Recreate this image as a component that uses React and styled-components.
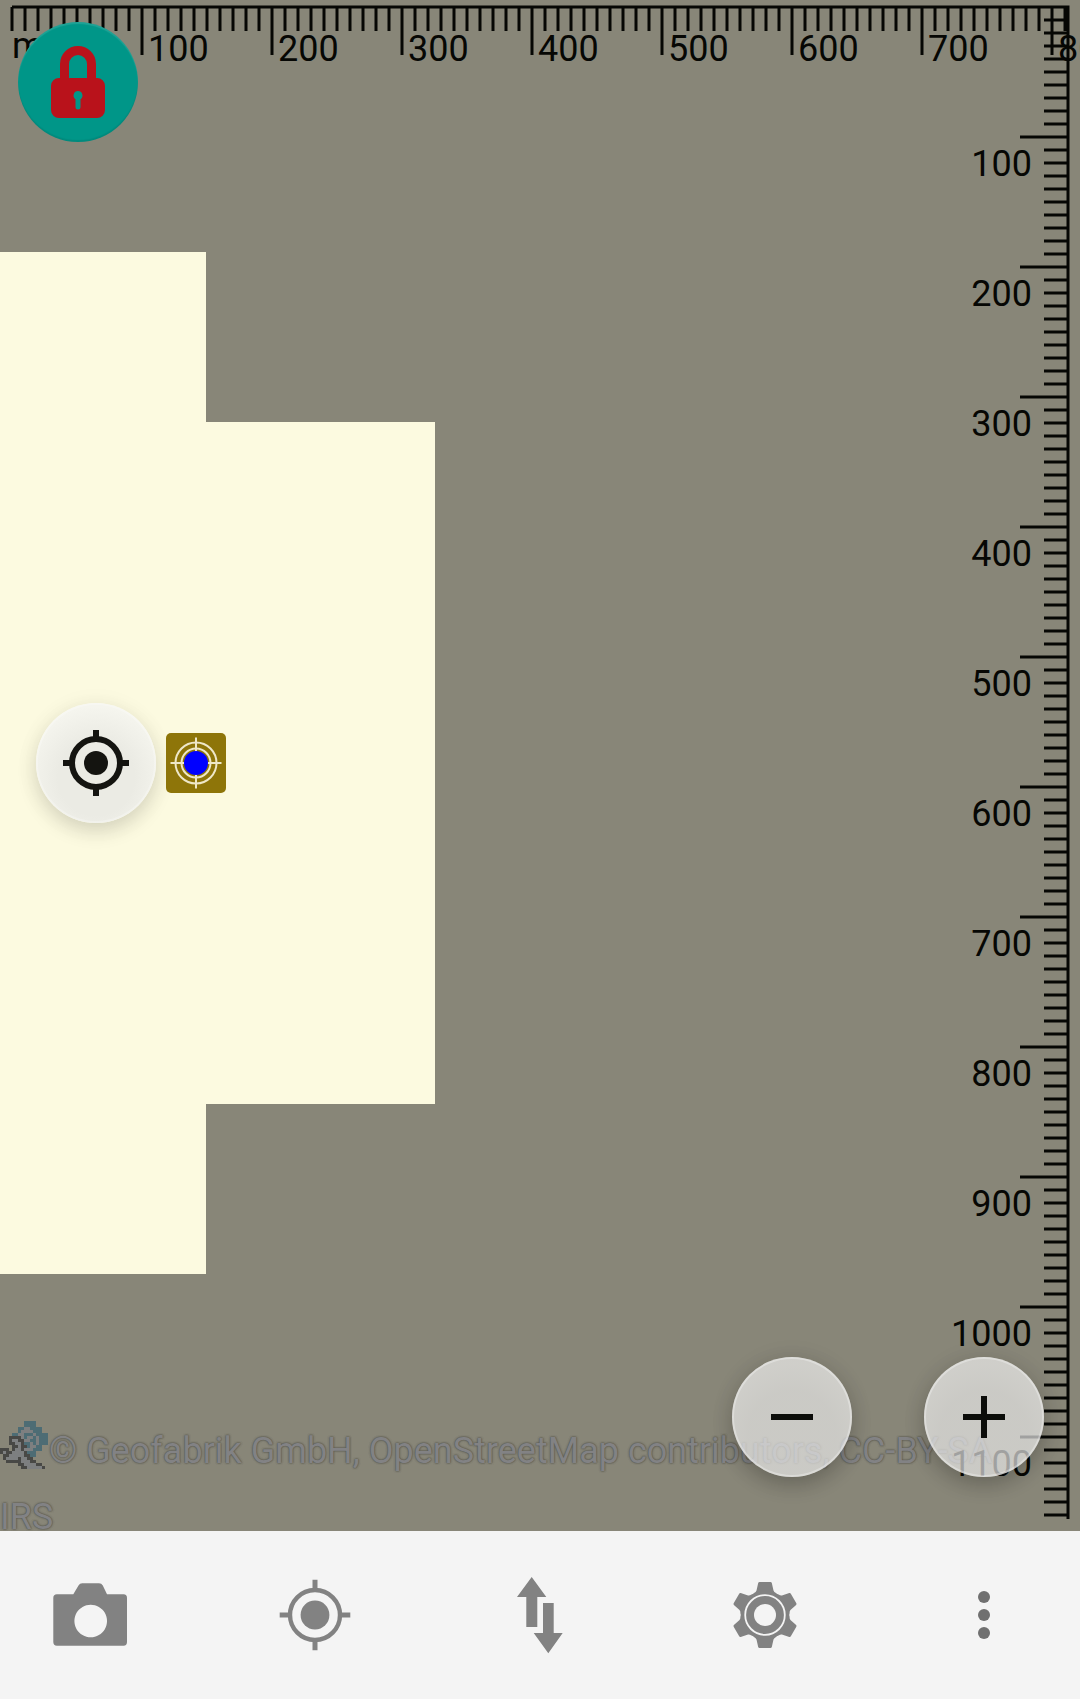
import React, { useLayoutEffect, useRef, useState } from "react";
import styled, { createGlobalStyle } from "styled-components";

const Global = createGlobalStyle`
  *, *::before, *::after { box-sizing: border-box; }
  body { margin: 0; font-family: Roboto, "Liberation Sans", sans-serif; }
`;

const Screen = styled.div`
  display: flex;
  flex-direction: column;
  height: 100vh;
  background: #f4f4f4;
`;

const MapView = styled.main`
  position: relative;
  flex: 1;
  min-height: 0;
  overflow: hidden;
  background: #888678;
`;

const Tile = styled.div`
  position: absolute;
  left: ${(p) => p.$x}px;
  top: ${(p) => p.$y}px;
  width: ${(p) => p.$w}px;
  height: ${(p) => p.$h}px;
  background: #fcfae0;
`;

const RulerLayer = styled.svg`
  position: absolute;
  inset: 0;
  width: 100%;
  height: 100%;
  pointer-events: none;

  path {
    fill: none;
    stroke: #060704;
    stroke-width: 3px;
  }

  text {
    fill: #060704;
    font-size: 36px;
  }
`;

const Attribution = styled.p`
  position: absolute;
  left: 0;
  right: 0;
  bottom: -19px;
  margin: 0;
  color: #828284;
  font-size: 36px;
  line-height: 66px;
  text-shadow: 0 0 2px #55554c, 0 0 2px #55554c;
`;

const PixelLogo = styled.svg`
  width: 48px;
  height: 48px;
  margin-right: 1px;
  vertical-align: -6px;
`;

const RoundButton = styled.button`
  display: grid;
  place-items: center;
  width: 120px;
  height: 120px;
  padding: 0;
  border: 0;
  border-radius: 50%;
  color: #0c0d0a;
  background: radial-gradient(circle at 50% 65%, rgba(234, 234, 234, 0.68) 45%, rgba(241, 241, 241, 0.68) 72%);
  box-shadow: inset 0 0 0 2px rgba(255, 255, 255, 0.3), 0 8px 20px rgba(0, 0, 0, 0.2), 0 2px 28px rgba(0, 0, 0, 0.06);
`;

const LockButton = styled(RoundButton)`
  position: absolute;
  left: 18px;
  top: 22px;
  color: #b9121b;
  background: #009688;
  box-shadow: inset 0 2px 1px rgba(255, 255, 255, 0.12), inset 0 -2px 1px rgba(0, 0, 0, 0.08);
`;

const LocationPin = styled.div`
  position: absolute;
  left: 36px;
  top: 703px;
  display: flex;
  align-items: center;
  gap: 10px;
`;

const Marker = styled.div`
  width: 60px;
  height: 60px;
  border-radius: 5px;
  background: #8e7509;
`;

const LocateButton = styled(RoundButton)`
  color: #141410;
  background: radial-gradient(circle at 50% 62%, #ebebe4 40%, #f5f5ee 74%);
  box-shadow: inset 0 0 0 2px rgba(255, 255, 255, 0.25), 0 8px 20px rgba(0, 0, 0, 0.14), 0 2px 28px rgba(0, 0, 0, 0.04);
`;

const ZoomControls = styled.div`
  position: absolute;
  right: 36px;
  bottom: 54px;
  display: flex;
  gap: 72px;
`;

const Toolbar = styled.nav`
  display: flex;
  align-items: center;
  justify-content: space-between;
  height: 168px;
  padding: 0 60px 0 48px;
  background: #f4f4f4;
`;

const ToolButton = styled.button`
  display: grid;
  place-items: center;
  width: ${(p) => (p.$narrow ? 72 : 84)}px;
  height: 84px;
  padding: 0;
  border: 0;
  color: ${(p) => (p.$narrow ? "#707070" : "#828282")};
  background: none;
`;

const Icon = styled.svg`
  display: block;
  width: ${(p) => p.$size}px;
  height: ${(p) => p.$size}px;
  fill: currentColor;
`;

const STEP = 13;
const MAJOR = STEP * 10;
const TOP = { x: 12, y: 7 };
const MARGIN = 12;

function Rulers({ width, height }) {
  const right = width - MARGIN;
  const bottom = height - MARGIN;
  const across = Math.max(0, Math.floor((right - TOP.x) / STEP));
  const down = Math.max(0, Math.floor((bottom - TOP.y) / STEP));
  let d = `M${TOP.x} ${TOP.y}H${right}V${bottom}`;
  for (let i = 0; i <= across; i++) {
    d += `M${TOP.x + i * STEP} ${TOP.y}V${i > 0 && i % 10 === 0 ? 55 : 31}`;
  }
  for (let i = 1; i <= down; i++) {
    d += `M${right} ${TOP.y + i * STEP}h${i % 10 === 0 ? -48 : -24}`;
  }
  const xs = Array.from({ length: Math.floor(across / 10) }, (_, i) => i + 1);
  const ys = Array.from({ length: Math.floor(down / 10) }, (_, i) => i + 1);
  return (
    <RulerLayer aria-label="Scale rulers in metres">
      <path d={d} />
      <text x="12" y="58">m</text>
      {xs.map((n) => (
        <text key={n} x={TOP.x + n * MAJOR + 6} y="61">{n * 100}</text>
      ))}
      {ys.map((n) => (
        <text key={n} x={right - 36} y={TOP.y + n * MAJOR + 39} textAnchor="end">{n * 100}</text>
      ))}
    </RulerLayer>
  );
}

const LOGO = [
  "........bbbb....",
  "........bbbb....",
  "......bbggbbbb..",
  "......bggggbbb..",
  "....bbggbbbgbbbb",
  "...ddddgbggbgbbb",
  "...dggddggbbgbbb",
  "...ddggdbbgbgbbb",
  "....ddgddbggbb..",
  "ddd.dggdgggbbb..",
  "dgddggggdbbb....",
  ".ddgggggddbb....",
  ".dggggdggdd.....",
  "..dddddgggdd....",
  "......ddggggdd..",
  ".......ddgggggd.",
];
const LOGO_COLORS = { b: "#4d6c74", g: "#7d7f80", d: "#484845" };

function Logo() {
  return (
    <PixelLogo viewBox="0 0 16 16" shapeRendering="crispEdges" aria-hidden="true">
      {LOGO.flatMap((row, y) =>
        [...row].map((c, x) =>
          c === "." ? null : <rect key={`${x}-${y}`} x={x} y={y} width="1" height="1" fill={LOGO_COLORS[c]} />
        )
      )}
    </PixelLogo>
  );
}

export default function App() {
  const mapRef = useRef(null);
  const [size, setSize] = useState({ width: 0, height: 0 });

  useLayoutEffect(() => {
    const el = mapRef.current;
    const measure = () => setSize({ width: el.clientWidth, height: el.clientHeight });
    measure();
    const observer = new ResizeObserver(measure);
    observer.observe(el);
    return () => observer.disconnect();
  }, []);

  return (
    <Screen>
      <Global />
      <MapView ref={mapRef}>
        <Tile $x={0} $y={252} $w={206} $h={1022} />
        <Tile $x={206} $y={422} $w={229} $h={682} />
        <Attribution>
          <Logo />© Geofabrik GmbH, OpenStreetMap contributors, CC-BY-SA
          <br />
          IRS
        </Attribution>
        <Rulers width={size.width} height={size.height} />
        <LockButton type="button" aria-label="Unlock map">
          <Icon $size={72} viewBox="0 0 72 72">
            <path
              fillRule="evenodd"
              d="M18 32V18a18 18 0 0 1 36 0V32h1a8 8 0 0 1 8 8V64a8 8 0 0 1-8 8H17a8 8 0 0 1-8-8V40a8 8 0 0 1 8-8ZM27 32H45V18a9 9 0 0 0-18 0ZM36 45a4.5 4.5 0 0 0-2.5 8.200V61a2.500 2.500 0 0 0 5 0V53.200A4.500 4.500 0 0 0 36 45Z"
            />
          </Icon>
        </LockButton>
        <LocationPin>
          <LocateButton type="button" aria-label="Centre on my location">
            <Icon $size={66} viewBox="-33 -33 66 66">
              <circle r="24" fill="none" stroke="currentColor" strokeWidth="6" />
              <circle r="12" />
              <path d="M-3-33h6v8h-6zM-3 25h6v8h-6zM-33-3h8v6h-8zM25-3h8v6h-8z" />
            </Icon>
          </LocateButton>
          <Marker>
            <Icon $size={60} viewBox="-30 -30 60 60">
              <g fill="none" stroke="#eee7c8" strokeWidth="2">
                <circle r="20.500" />
                <circle r="14.500" />
                <path d="M-25.500 0h51M0-25.500v51" />
              </g>
              <circle r="12" fill="#0000ff" />
            </Icon>
          </Marker>
        </LocationPin>
        <ZoomControls>
          <RoundButton type="button" aria-label="Zoom out">
            <Icon $size={42} viewBox="0 0 42 42">
              <path d="M0 18h42v6H0z" />
            </Icon>
          </RoundButton>
          <RoundButton type="button" aria-label="Zoom in">
            <Icon $size={42} viewBox="0 0 42 42">
              <path d="M0 18h18V0h6v18h18v6H24v18h-6V24H0z" />
            </Icon>
          </RoundButton>
        </ZoomControls>
      </MapView>
      <Toolbar aria-label="Map tools">
        <ToolButton type="button" aria-label="Camera">
          <Icon $size={84} viewBox="0 0 84 84">
            <path
              fillRule="evenodd"
              d="M9 21.300H25.300L30.500 12.500Q31.800 10.300 34.300 10.300H51Q53.500 10.300 54.800 12.500L59 21.300H75.500Q79 21.300 79 25V69Q79 72.700 75.500 72.700H9Q5.300 72.700 5.300 69V25Q5.300 21.300 9 21.300ZM42.700 31.700a16.300 16.300 0 1 0 0.010 0Z"
            />
          </Icon>
        </ToolButton>
        <ToolButton type="button" aria-label="Position">
          <Icon $size={84} viewBox="-42 -42 84 84">
            <circle r="25" fill="none" stroke="currentColor" strokeWidth="4.400" />
            <circle r="14.400" />
            <path d="M-2.500-35.300h5v10h-5zM-2.500 25.300h5v10h-5zM-35.300-2.500h10v5h-10zM25.300-2.500h10v5h-10z" />
          </Icon>
        </ToolButton>
        <ToolButton type="button" aria-label="Transfer">
          <Icon $size={84} viewBox="0 0 84 84">
            <path d="M33.700 4L48.300 24H39.300V54H28.300V24H19ZM45 30H55.700V60H64.700L50.300 80.300L35.700 60H45Z" />
          </Icon>
        </ToolButton>
        <ToolButton type="button" aria-label="Settings">
          <Icon $size={84} viewBox="-42 -42 84 84">
            <circle r="24" />
            {[0, 60, 120, 180, 240, 300].map((a) => (
              <path
                key={a}
                transform={`rotate(${a})`}
                d="M-5.500-33H5.500Q6.500-33 6.800-32L8.500-24.500Q9-23 11-22L14-19H-14L-11-22Q-9-23-8.500-24.500L-6.800-32Q-6.500-33-5.500-33Z"
              />
            ))}
            <circle r="19.800" fill="none" stroke="#f4f4f4" strokeWidth="1.800" />
            <circle r="11" fill="#f4f4f4" />
          </Icon>
        </ToolButton>
        <ToolButton type="button" aria-label="More options" $narrow>
          <Icon $size={48} viewBox="-24 -24 48 48">
            <circle cy="-18" r="6" />
            <circle r="6" />
            <circle cy="18" r="6" />
          </Icon>
        </ToolButton>
      </Toolbar>
    </Screen>
  );
}
